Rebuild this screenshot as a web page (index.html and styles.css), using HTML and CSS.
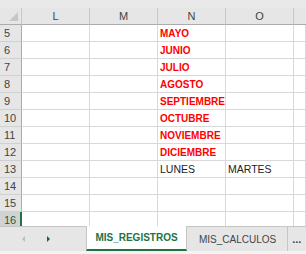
FILE: index.html
```html
<!DOCTYPE html>
<html lang="es">
<head>
    <meta charset="UTF-8">
    <title>MIS_REGISTROS</title>
    <link rel="stylesheet" href="styles.css">
</head>
<body>
    <div class="sheet">
        <div class="topstrip"></div>
        <div class="grid">
            <div class="corner"><span class="tri"></span></div>
            <div class="colhead">L</div>
            <div class="colhead">M</div>
            <div class="colhead">N</div>
            <div class="colhead">O</div>
            <div class="colhead last"></div>

            <div class="rowhead">5</div><div class="cell"></div><div class="cell"></div><div class="cell red">MAYO</div><div class="cell"></div><div class="cell"></div>
            <div class="rowhead">6</div><div class="cell"></div><div class="cell"></div><div class="cell red">JUNIO</div><div class="cell"></div><div class="cell"></div>
            <div class="rowhead">7</div><div class="cell"></div><div class="cell"></div><div class="cell red">JULIO</div><div class="cell"></div><div class="cell"></div>
            <div class="rowhead">8</div><div class="cell"></div><div class="cell"></div><div class="cell red">AGOSTO</div><div class="cell"></div><div class="cell"></div>
            <div class="rowhead">9</div><div class="cell"></div><div class="cell"></div><div class="cell red">SEPTIEMBRE</div><div class="cell"></div><div class="cell"></div>
            <div class="rowhead">10</div><div class="cell"></div><div class="cell"></div><div class="cell red">OCTUBRE</div><div class="cell"></div><div class="cell"></div>
            <div class="rowhead">11</div><div class="cell"></div><div class="cell"></div><div class="cell red">NOVIEMBRE</div><div class="cell"></div><div class="cell"></div>
            <div class="rowhead">12</div><div class="cell"></div><div class="cell"></div><div class="cell red">DICIEMBRE</div><div class="cell"></div><div class="cell"></div>
            <div class="rowhead">13</div><div class="cell"></div><div class="cell"></div><div class="cell">LUNES</div><div class="cell">MARTES</div><div class="cell"></div>
            <div class="rowhead">14</div><div class="cell"></div><div class="cell"></div><div class="cell"></div><div class="cell"></div><div class="cell"></div>
            <div class="rowhead">15</div><div class="cell"></div><div class="cell"></div><div class="cell"></div><div class="cell"></div><div class="cell"></div>
            <div class="rowhead selected">16</div><div class="cell"></div><div class="cell"></div><div class="cell"></div><div class="cell"></div><div class="cell"></div>
        </div>
    </div>

    <div class="tabbar">
        <div class="nav">
            <svg width="8" height="8" viewBox="0 0 8 8"><path d="M5 1 L2 4 L5 7 Z" fill="#bdbdbd"/></svg>
            <svg width="8" height="8" viewBox="0 0 8 8"><path d="M3 1 L6 4 L3 7 Z" fill="#1e5e3a"/></svg>
        </div>
        <div class="tab active">MIS_REGISTROS</div>
        <div class="tab">MIS_CALCULOS</div>
        <div class="more">...</div>
    </div>
    <div class="bottomstrip"></div>
</body>
</html>
```

FILE: styles.css
```css
body {
    margin: 0;
    padding: 0;
    width: 306px;
    height: 254px;
    overflow: hidden;
    background-color: #ffffff;
    font-family: "Liberation Sans", Arial, sans-serif;
    font-size: 10px;
    color: #222222;
}

.sheet {
    height: 226px;
    overflow: hidden;
    background-color: #ffffff;
}

.topstrip {
    height: 8px;
    background-color: #e9e9e9;
}

.grid {
    display: grid;
    grid-template-columns: 22px 68px 68px 68px 68px 1fr;
    grid-auto-rows: 17px;
}

.corner {
    background-color: #e6e6e6;
    border-right: 1px solid #c8c8c8;
    border-bottom: 1px solid #ababab;
    position: relative;
}

.tri {
    position: absolute;
    right: 3px;
    bottom: 3px;
    width: 0;
    height: 0;
    border-left: 9px solid transparent;
    border-bottom: 9px solid #c6c6c6;
}

.colhead {
    background-color: #e6e6e6;
    border-right: 1px solid #c8c8c8;
    border-bottom: 1px solid #ababab;
    display: flex;
    align-items: center;
    justify-content: center;
    color: #444444;
    font-size: 11px;
}

.colhead.last {
    border-right: none;
}

.rowhead {
    background-color: #e6e6e6;
    border-right: 1px solid #ababab;
    border-bottom: 1px solid #d0d0d0;
    display: flex;
    align-items: center;
    padding-left: 4px;
    color: #444444;
    font-size: 11px;
}

.rowhead.selected {
    background-color: #d2d2d2;
    color: #1e5e3a;
    border-right: 2px solid #217346;
}

.cell {
    border-right: 1px solid #d9d9d9;
    border-bottom: 1px solid #d9d9d9;
    display: flex;
    align-items: center;
    padding-left: 2px;
    white-space: nowrap;
    overflow: visible;
    font-size: 10.5px;
    color: #222222;
}

.cell.red {
    color: #ff0000;
    font-weight: bold;
    font-size: 10px;
}

.tabbar {
    height: 24px;
    display: flex;
    align-items: stretch;
    background-color: #e6e6e6;
    border-top: 1px solid #c6c6c6;
}

.nav {
    width: 86px;
    flex-shrink: 0;
    display: flex;
    align-items: center;
    gap: 16px;
    padding-left: 20px;
    box-sizing: border-box;
}

.tab {
    display: flex;
    align-items: center;
    padding: 0 11px 0 12px;
    color: #444444;
    font-size: 10px;
    border-right: 1px solid #c6c6c6;
}

.tab.active {
    width: 101px;
    flex-shrink: 0;
    padding: 0;
    box-sizing: border-box;
    justify-content: center;
    background-color: #ffffff;
    color: #217346;
    font-weight: bold;
    font-size: 10px;
    border-left: 1px solid #c6c6c6;
    border-bottom: 2px solid #217346;
    margin-top: -1px;
}

.more {
    display: flex;
    align-items: center;
    padding-left: 4px;
    color: #444444;
    font-size: 11px;
    font-weight: bold;
}

.bottomstrip {
    height: 3px;
    background-color: #f3f3f3;
}
```
